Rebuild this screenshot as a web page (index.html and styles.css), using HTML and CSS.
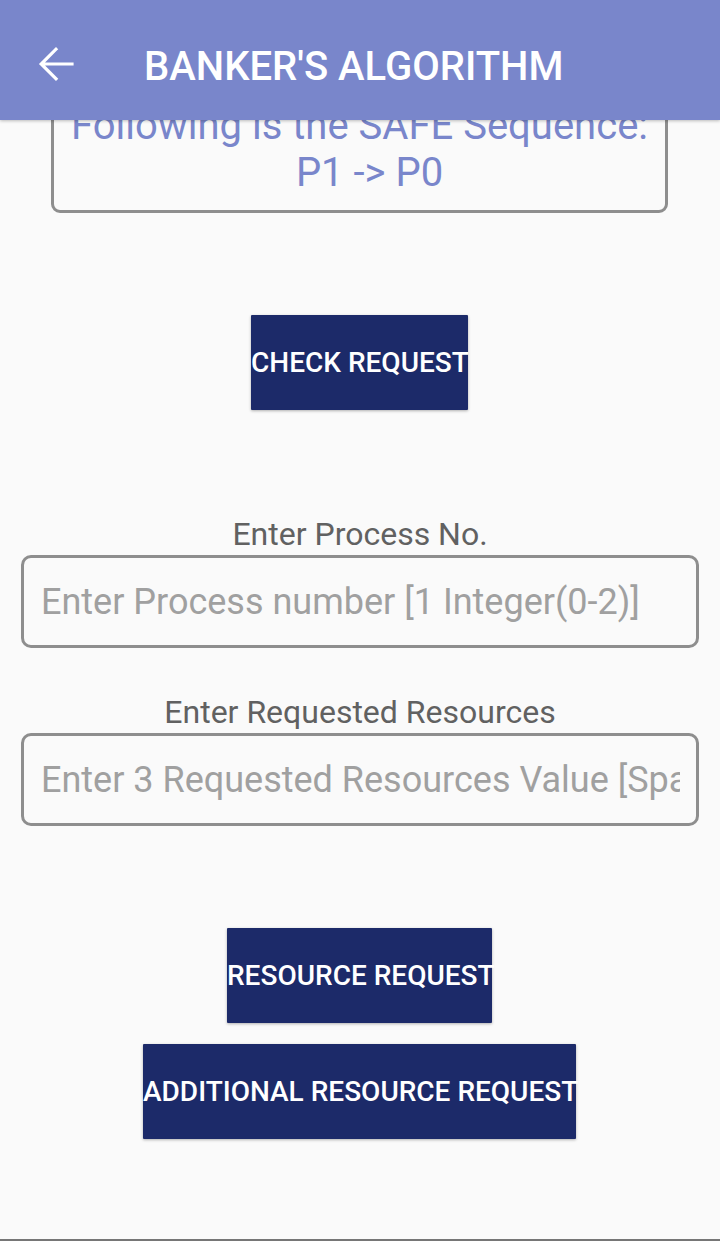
FILE: index.html
```html
<!DOCTYPE html>
<html lang="en">
<head>
<meta charset="utf-8">
<title>Banker's Algorithm</title>
<link rel="stylesheet" href="styles.css">
</head>
<body>
<div class="screen">
  <header class="appbar">
    <svg class="back" viewBox="0 0 24 24" width="48" height="48" aria-hidden="true">
      <path d="M20 12H5.2M12 4.6L4.6 12l7.4 7.4" fill="none" stroke="#fff" stroke-width="1.6" stroke-linecap="square"/>
    </svg>
    <h1 class="title">BANKER'S ALGORITHM</h1>
  </header>
  <main class="content">
    <div class="result">
      <span class="result-line">Following is the SAFE Sequence:</span>
      <span class="result-line seq">P1 -&gt; P0</span>
    </div>
    <button class="btn btn-check" type="button">CHECK REQUEST</button>
    <label class="field-label label-process" for="proc">Enter Process No.</label>
    <input class="field" id="proc" type="text" placeholder="Enter Process number [1 Integer(0-2)]">
    <label class="field-label label-res" for="res">Enter Requested Resources</label>
    <input class="field" id="res" type="text" placeholder="Enter 3 Requested Resources Value [Space Separated]">
    <button class="btn btn-resource" type="button">RESOURCE REQUEST</button>
    <button class="btn btn-additional" type="button">ADDITIONAL RESOURCE REQUEST</button>
  </main>
  <div class="nav-edge"></div>
</div>
</body>
</html>
```

FILE: styles.css
```css
* { box-sizing: border-box; }
html, body {
  margin: 0;
  padding: 0;
  background: #fafafa;
  font-family: Roboto, "Liberation Sans", sans-serif;
}
.screen {
  position: relative;
  width: 720px;
  height: 1241px;
  display: flex;
  flex-direction: column;
  overflow: hidden;
}
.appbar {
  position: absolute;
  top: 0;
  left: 0;
  right: 0;
  height: 120px;
  background: #7986cb;
  display: flex;
  align-items: center;
  padding: 12px 0 0 32px;
  box-shadow: 0 1px 3px rgba(0,0,0,0.25);
  z-index: 2;
}
.back {
  display: block;
  margin-right: 64px;
  margin-bottom: 4px;
}
.title {
  margin: 0;
  font-size: 40px;
  font-weight: 500;
  color: #fff;
  line-height: 47px;
  white-space: nowrap;
}
.content {
  flex: 1;
  display: flex;
  flex-direction: column;
  align-items: center;
}
.result {
  margin-top: 85px;
  width: 617px;
  height: 128px;
  border: 3px solid #8e8e8e;
  border-radius: 9px;
  padding: 14px 0;
  text-align: center;
  color: #7986cb;
  font-size: 40px;
  line-height: 47px;
  white-space: nowrap;
  margin-left: -1px;
}
.result-line {
  display: block;
}
.seq {
  padding-left: 20px;
}
.btn {
  display: block;
  border: none;
  padding: 0;
  height: 95px;
  background: #1c2a69;
  color: #fff;
  font-family: Roboto, "Liberation Sans", sans-serif;
  font-size: 28px;
  font-weight: 500;
  white-space: nowrap;
  box-shadow: 0 1px 3px rgba(0,0,0,0.3);
  border-radius: 1px;
}
.btn-check {
  margin-top: 102px;
  width: 217px;
  margin-left: -1px;
}
.field-label {
  display: block;
  font-size: 32px;
  line-height: 37px;
  color: #616161;
}
.label-process { margin-top: 106px; }
.label-res { margin-top: 46px; }
.field {
  display: block;
  width: 678px;
  height: 93px;
  margin-top: 2px;
  border: 3px solid #8e8e8e;
  border-radius: 10px;
  background: transparent;
  padding: 0 16px 0 17px;
  font-family: Roboto, "Liberation Sans", sans-serif;
  font-size: 36px;
  color: #424242;
  outline: none;
}
.field::placeholder {
  color: #a0a0a0;
  opacity: 1;
}
.btn-resource {
  margin-top: 102px;
  width: 265px;
  margin-left: -1px;
}
.btn-additional {
  margin-top: 21px;
  width: 433px;
  margin-left: -1px;
}
.nav-edge {
  height: 2px;
  background: #767676;
}
```
